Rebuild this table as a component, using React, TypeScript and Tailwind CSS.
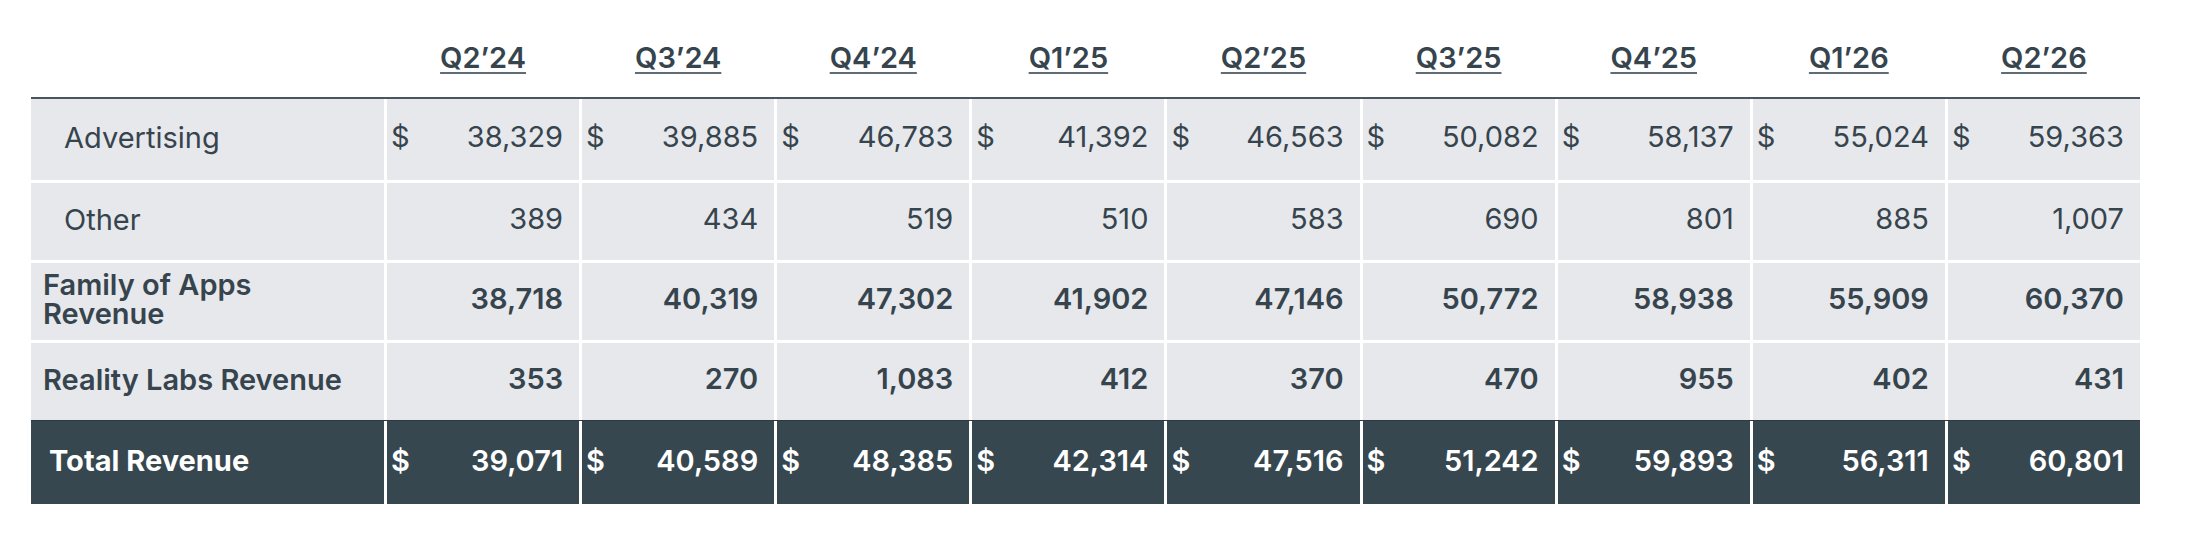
const quarters = ["Q2’24", "Q3’24", "Q4’24", "Q1’25", "Q2’25", "Q3’25", "Q4’25", "Q1’26", "Q2’26"];

type Row = {
  label: string;
  values: string[];
  dollar?: boolean;
  bold?: boolean;
  indent?: boolean;
  narrow?: boolean;
};

const rows: Row[] = [
  {
    label: "Advertising",
    values: ["38,329", "39,885", "46,783", "41,392", "46,563", "50,082", "58,137", "55,024", "59,363"],
    dollar: true,
    indent: true,
  },
  {
    label: "Other",
    values: ["389", "434", "519", "510", "583", "690", "801", "885", "1,007"],
    indent: true,
  },
  {
    label: "Family of Apps Revenue",
    values: ["38,718", "40,319", "47,302", "41,902", "47,146", "50,772", "58,938", "55,909", "60,370"],
    bold: true,
    narrow: true,
  },
  {
    label: "Reality Labs Revenue",
    values: ["353", "270", "1,083", "412", "370", "470", "955", "402", "431"],
    bold: true,
  },
];

const total = ["39,071", "40,589", "48,385", "42,314", "47,516", "51,242", "59,893", "56,311", "60,801"];

const grid = "grid grid-cols-[353px_repeat(9,minmax(0,1fr))] gap-x-[3px]";

export default function App() {
  return (
    <div
      className="w-[2204px] h-[534px] bg-white text-[#36444e] overflow-hidden"
      style={{ fontFamily: "Inter, 'Noto Sans', sans-serif" }}
    >
      <div className="ml-[31px] w-[2109px]">
        {/* Quarter headings */}
        <div className={`${grid} h-[97px] items-end pb-[23px]`}>
          <div />
          {quarters.map((q) => (
            <div key={q} className="text-center">
              <span className="text-[29px] leading-[29px] font-semibold underline decoration-2 underline-offset-[4px] decoration-[#5f6b75]">
                {q}
              </span>
            </div>
          ))}
        </div>

        <div className="h-[2px] bg-[#4a5560]" />

        {rows.map((r, i) => (
          <div
            key={i}
            className={`${grid} ${i === 0 ? "h-[81px]" : "h-[77px]"} ${i < rows.length - 1 ? "mb-[3px]" : ""} ${
              r.bold ? "font-semibold" : "font-normal"
            } text-[29px]`}
          >
            <div
              className={`bg-[#e7e8eb] flex items-center pb-[5px] ${r.indent ? "pl-[33px]" : "pl-[12px]"}`}
            >
              <p className={`leading-[29px] ${r.narrow ? "w-[240px]" : ""}`}>{r.label}</p>
            </div>
            {r.values.map((v, j) => (
              <div key={j} className="bg-[#e7e8eb] flex items-center justify-between pl-[4px] pr-[16px] pb-[5px]">
                <span>{r.dollar ? "$" : ""}</span>
                <span>{v}</span>
              </div>
            ))}
          </div>
        ))}

        {/* Total */}
        <div className="border-t border-[#2c3a42]">
          <div className={`${grid} h-[83px] text-[29px] font-semibold text-white bg-white`}>
            <div className="bg-[#37474f] flex items-center pl-[18px] pb-[3px] font-bold">Total Revenue</div>
            {total.map((v, j) => (
              <div key={j} className="bg-[#37474f] flex items-center justify-between pl-[4px] pr-[16px] pb-[3px]">
                <span>$</span>
                <span>{v}</span>
              </div>
            ))}
          </div>
        </div>
      </div>
    </div>
  );
}
